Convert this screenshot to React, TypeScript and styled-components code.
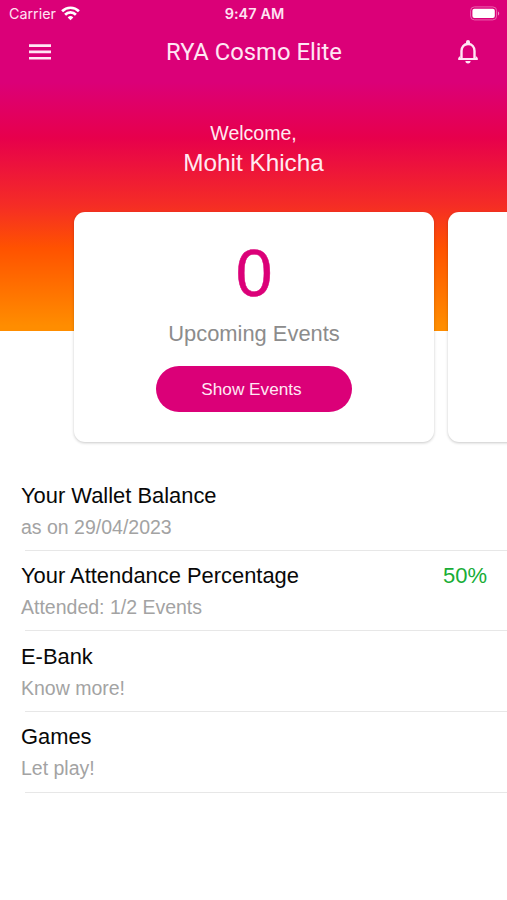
import React from 'react';
import styled, { createGlobalStyle } from 'styled-components';

const PINK = '#db0078';
const SYSTEM = 'Inter, "Liberation Sans", sans-serif';

const GlobalStyle = createGlobalStyle`
  *, *::before, *::after { box-sizing: border-box; }
  body {
    margin: 0;
    background: #fff;
    font-family: "Liberation Sans", Arial, sans-serif;
  }
  h1, h2, p { margin: 0; font-weight: 400; }
`;

const Screen = styled.main`
  width: 100%;
  max-width: 507px;
  height: 900px;
  overflow: hidden;
  background: #fff;
`;

const Top = styled.header`
  height: 330.5px;
  color: #fff;
  background: linear-gradient(
    to bottom,
    ${PINK} 82px,
    #e7004c 138px,
    #f52d25 206px,
    #ff5200 248px,
    #ff8d00 326px
  );
`;

const StatusBar = styled.div`
  display: grid;
  grid-template-columns: 1fr auto 1fr;
  align-items: center;
  height: 27px;
  padding: 0 7px 0 9px;
  color: #ffe3f3;
  font: 400 14.3px/27px ${SYSTEM};
`;

const Carrier = styled.div`
  display: flex;
  align-items: center;
  gap: 5.5px;
  letter-spacing: 0;
`;

const Clock = styled.time`
  font-weight: 600;
  font-size: 14.4px;
  letter-spacing: 0.1px;
`;

const Battery = styled.div`
  display: flex;
  justify-content: flex-end;
`;

const NavBar = styled.nav`
  display: grid;
  grid-template-columns: 24px 1fr 24px;
  align-items: center;
  height: 50px;
  padding: 0 27px 0 28px;
`;

const IconButton = styled.button`
  display: flex;
  padding: 0;
  border: 0;
  background: none;
  color: #ffe6f4;
`;

const Title = styled.h1`
  padding-top: 1px;
  color: #ffe6f4;
  font: 400 23.8px/49px Roboto, sans-serif;
  text-align: center;
  white-space: nowrap;
`;

const Greeting = styled.div`
  display: flex;
  flex-direction: column;
  align-items: center;
  padding-top: 43px;
  color: #ffeaf0;
`;

const Hello = styled.p`
  font-size: 19.5px;
  line-height: 26px;
`;

const UserName = styled.h2`
  font-size: 24.3px;
  line-height: 34px;
`;

const Carousel = styled.section`
  display: flex;
  gap: 14px;
  margin-top: -118.5px;
  padding-left: 74px;
`;

const Card = styled.article`
  display: flex;
  flex: 0 0 360px;
  flex-direction: column;
  align-items: center;
  height: 230px;
  padding-top: 26px;
  border-radius: 11px;
  background: #fff;
  box-shadow: 0 1px 3px rgba(0, 0, 0, 0.22);
`;

const Count = styled.p`
  color: ${PINK};
  font-size: 66px;
  line-height: 70px;
  -webkit-text-stroke: 0.5px ${PINK};
`;

const CountLabel = styled.p`
  margin-top: 11px;
  color: #8c8c8c;
  font-size: 21.9px;
  line-height: 30px;
`;

const PillButton = styled.button`
  width: 196px;
  height: 46px;
  margin-top: 17px;
  padding: 1px 5px 0 0;
  border: 0;
  border-radius: 23px;
  background: ${PINK};
  color: #ffe8f4;
  font: 400 17.2px/45px "Liberation Sans", Arial, sans-serif;
`;

const List = styled.ul`
  margin: 28px 0 0;
  padding: 0;
  list-style: none;
`;

const Row = styled.li`
  display: flex;
  justify-content: space-between;
  height: 80.67px;
  padding: 10.500px 20px 0 21px;
  background: linear-gradient(#e7e7e7, #e7e7e7) 25px 100% / 100% 1px no-repeat;
`;

const RowTitle = styled.h2`
  color: #080808;
  font-size: 21.9px;
  line-height: 30px;
`;

const RowNote = styled.p`
  margin-top: 1px;
  color: #a3a3a3;
  font-size: 19.5px;
  line-height: 30px;
`;

const RowValue = styled.span`
  color: #18ad36;
  font-size: 22px;
  line-height: 30px;
`;

const rows = [
  { title: 'Your Wallet Balance', note: 'as on 29/04/2023' },
  { title: 'Your Attendance Percentage', note: 'Attended: 1/2 Events', value: '50%' },
  { title: 'E-Bank', note: 'Know more!' },
  { title: 'Games', note: 'Let play!' },
];

const WifiIcon = () => (
  <svg width="19" height="15" viewBox="0 0 19 15" fill="none" stroke="#fff" strokeWidth="2.7">
    <path d="M1.100 5.2a12 12 0 0 1 16.800 0" />
    <path d="M4.100 8.700a7.600 7.600 0 0 1 10.800 0" />
    <path d="M9.5 14.2 6.7 11.4a4 4 0 0 1 5.6 0Z" fill="#fff" stroke="none" />
  </svg>
);

const BatteryIcon = () => (
  <svg width="30" height="15" viewBox="0 0 30 15">
    <rect x="0.6" y="0.9" width="26" height="13" rx="3.8" fill="none" stroke="#ea62af" />
    <rect x="2.4" y="2.8" width="22.4" height="9.2" rx="2" fill="#fff" />
    <path d="M28 5.4c1.6.5 1.6 3.5 0 4Z" fill="#f08bc4" />
  </svg>
);

const MenuIcon = () => (
  <svg width="24" height="24" viewBox="0 0 24 24" fill="currentColor">
    <path d="M1 4.200h22v2.700H1zM1 10.600h22v2.700H1zM1 16.900h22v2.700H1z" />
  </svg>
);

const BellIcon = () => (
  <svg width="24" height="26" viewBox="0 0 24 26" fill="none" stroke="currentColor" strokeWidth="2.4">
    <path d="M5.500 19.500v-7.400C5.500 7.9 8 5 12 5s6.500 2.900 6.500 7.100v7.400" />
    <path d="M4.300 16.800 2.200 19v1.900h19.600V19l-2.100-2.200v2.200H4.300Z" fill="currentColor" stroke="none" />
    <path d="M10 4.500V3a2 2 0 0 1 4 0v1.500ZM9.400 22h5.200a2.600 2.400 0 0 1-5.200 0Z" fill="currentColor" stroke="none" />
  </svg>
);

export default function App() {
  return (
    <>
      <GlobalStyle />
      <Screen>
        <Top>
          <StatusBar>
            <Carrier>
              Carrier
              <WifiIcon />
            </Carrier>
            <Clock>9:47 AM</Clock>
            <Battery>
              <BatteryIcon />
            </Battery>
          </StatusBar>
          <NavBar>
            <IconButton aria-label="Menu">
              <MenuIcon />
            </IconButton>
            <Title>RYA Cosmo Elite</Title>
            <IconButton aria-label="Notifications">
              <BellIcon />
            </IconButton>
          </NavBar>
          <Greeting>
            <Hello>Welcome,</Hello>
            <UserName>Mohit Khicha</UserName>
          </Greeting>
        </Top>
        <Carousel>
          <Card>
            <Count>0</Count>
            <CountLabel>Upcoming Events</CountLabel>
            <PillButton>Show Events</PillButton>
          </Card>
          <Card />
        </Carousel>
        <List>
          {rows.map((row) => (
            <Row key={row.title}>
              <div>
                <RowTitle>{row.title}</RowTitle>
                <RowNote>{row.note}</RowNote>
              </div>
              {row.value && <RowValue>{row.value}</RowValue>}
            </Row>
          ))}
        </List>
      </Screen>
    </>
  );
}
